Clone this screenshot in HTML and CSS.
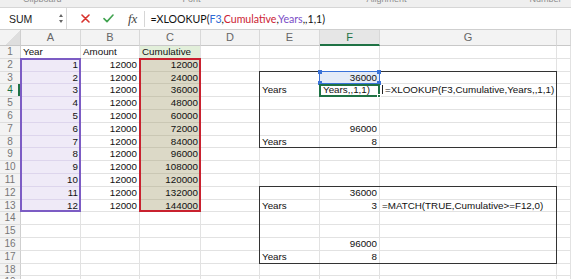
FILE: index.html
```html
<!DOCTYPE html>
<html lang="en">
<head>
  <meta charset="UTF-8" />
  <title>Cumulative lookup</title>
  <link rel="stylesheet" href="styles.css">
</head>
<body>
  <div class="ribbon">
    <span class="grp clip">Clipboard</span>
    <span class="grp font">Font</span>
    <span class="grp align">Alignment</span>
    <span class="grp num">Number</span>
  </div>

  <div class="fbar">
    <div class="namebox">
      SUM
      <span class="spin"><i class="up"></i><i class="down"></i></span>
    </div>
    <svg class="btn-x" width="9" height="9" viewBox="0 0 9 9"><path d="M1 1L8 8M8 1L1 8" stroke="#d8322e" stroke-width="1.6" stroke-linecap="round"/></svg>
    <svg class="btn-ok" width="11" height="9" viewBox="0 0 11 9"><path d="M1 4.6L4 7.6L10 1" fill="none" stroke="#41a350" stroke-width="1.6" stroke-linecap="round" stroke-linejoin="round"/></svg>
    <span class="fx">fx</span>
    <span class="fsep"></span>
    <div class="formula">=XLOOKUP(<span class="f-blue">F3</span>,<span class="f-red">Cumulative</span>,<span class="f-purple">Years</span>,,1,1)</div>
  </div>

  <div class="sheet">
    <div class="cells">
      <!-- header -->
      <div class="corner"></div>
      <div class="h">A</div><div class="h">B</div><div class="h">C</div><div class="h">D</div>
      <div class="h">E</div><div class="h h-on">F</div><div class="h">G</div><div class="h"></div>

      <div class="rh">1</div>
      <div class="c">Year</div><div class="c">Amount</div><div class="c gr">Cumulative</div>
      <div class="c"></div><div class="c"></div><div class="c"></div><div class="c"></div><div class="c"></div>

      <div class="rh">2</div>
      <div class="c n pu">1</div><div class="c n">12000</div><div class="c n tan">12000</div>
      <div class="c"></div><div class="c"></div><div class="c"></div><div class="c"></div><div class="c"></div>

      <div class="rh">3</div>
      <div class="c n pu">2</div><div class="c n">12000</div><div class="c n tan">24000</div>
      <div class="c"></div><div class="c"></div><div class="c n picked">36000</div><div class="c"></div><div class="c"></div>

      <div class="rh rh-on">4</div>
      <div class="c n pu">3</div><div class="c n">12000</div><div class="c n tan">36000</div>
      <div class="c"></div><div class="c">Years</div><div class="c edit">Years,,1,1)</div>
      <div class="c g"><span class="caret"></span>=XLOOKUP(F3,Cumulative,Years,,1,1)</div><div class="c"></div>

      <div class="rh">5</div>
      <div class="c n pu">4</div><div class="c n">12000</div><div class="c n tan">48000</div>
      <div class="c"></div><div class="c"></div><div class="c"></div><div class="c"></div><div class="c"></div>

      <div class="rh">6</div>
      <div class="c n pu">5</div><div class="c n">12000</div><div class="c n tan">60000</div>
      <div class="c"></div><div class="c"></div><div class="c"></div><div class="c"></div><div class="c"></div>

      <div class="rh">7</div>
      <div class="c n pu">6</div><div class="c n">12000</div><div class="c n tan">72000</div>
      <div class="c"></div><div class="c"></div><div class="c n">96000</div><div class="c"></div><div class="c"></div>

      <div class="rh">8</div>
      <div class="c n pu">7</div><div class="c n">12000</div><div class="c n tan">84000</div>
      <div class="c"></div><div class="c">Years</div><div class="c n">8</div><div class="c"></div><div class="c"></div>

      <div class="rh">9</div>
      <div class="c n pu">8</div><div class="c n">12000</div><div class="c n tan">96000</div>
      <div class="c"></div><div class="c"></div><div class="c"></div><div class="c"></div><div class="c"></div>

      <div class="rh">10</div>
      <div class="c n pu">9</div><div class="c n">12000</div><div class="c n tan">108000</div>
      <div class="c"></div><div class="c"></div><div class="c"></div><div class="c"></div><div class="c"></div>

      <div class="rh">11</div>
      <div class="c n pu">10</div><div class="c n">12000</div><div class="c n tan">120000</div>
      <div class="c"></div><div class="c"></div><div class="c"></div><div class="c"></div><div class="c"></div>

      <div class="rh">12</div>
      <div class="c n pu">11</div><div class="c n">12000</div><div class="c n tan">132000</div>
      <div class="c"></div><div class="c"></div><div class="c n">36000</div><div class="c"></div><div class="c"></div>

      <div class="rh">13</div>
      <div class="c n pu">12</div><div class="c n">12000</div><div class="c n tan">144000</div>
      <div class="c"></div><div class="c">Years</div><div class="c n">3</div>
      <div class="c g">=MATCH(TRUE,Cumulative&gt;=F12,0)</div><div class="c"></div>

      <div class="rh">14</div>
      <div class="c"></div><div class="c"></div><div class="c"></div>
      <div class="c"></div><div class="c"></div><div class="c"></div><div class="c"></div><div class="c"></div>

      <div class="rh">15</div>
      <div class="c"></div><div class="c"></div><div class="c"></div>
      <div class="c"></div><div class="c"></div><div class="c"></div><div class="c"></div><div class="c"></div>

      <div class="rh">16</div>
      <div class="c"></div><div class="c"></div><div class="c"></div>
      <div class="c"></div><div class="c"></div><div class="c n">96000</div><div class="c"></div><div class="c"></div>

      <div class="rh">17</div>
      <div class="c"></div><div class="c"></div><div class="c"></div>
      <div class="c"></div><div class="c">Years</div><div class="c n">8</div><div class="c"></div><div class="c"></div>

      <div class="rh">18</div>
      <div class="c"></div><div class="c"></div><div class="c"></div>
      <div class="c"></div><div class="c"></div><div class="c"></div><div class="c"></div><div class="c"></div>

      <div class="rh">19</div>
      <div class="c"></div><div class="c"></div><div class="c"></div>
      <div class="c"></div><div class="c"></div><div class="c"></div><div class="c"></div><div class="c"></div>
    </div>

    <!-- range outlines drawn over the cells -->
    <div class="marks">
      <div class="m-purple"></div>
      <div class="m-red"></div>
      <div class="m-box m-box1"></div>
      <div class="m-box m-box2"></div>
      <div class="m-sel"><i class="hd hd-tl"></i><i class="hd hd-tr"></i><i class="hd hd-bl"></i><i class="hd hd-br"></i></div>
      <div class="m-act"><i class="hd-g"></i></div>
    </div>
  </div>
</body>
</html>
```

FILE: styles.css
```css
* {
  box-sizing: border-box;
}

body {
  margin: 0;
  width: 571px;
  height: 279px;
  overflow: hidden;
  background: #fff;
  font-family: 'Liberation Sans', Arial, sans-serif;
  color: #111;
}

/* ribbon group labels, mostly scrolled off */
.ribbon {
  height: 8px;
  display: flex;
  overflow: hidden;
  background: #efefef;
  border-bottom: 1px solid #d6d6d6;
  font-size: 9px;
  color: #8e8e8e;
}

.grp {
  line-height: 9px;
  margin-top: -5px;
}

.clip { margin-left: 23px; }
.font { margin-left: 121px; }
.align { margin-left: 166px; }
.num { margin-left: 123px; }

/* formula bar */
.fbar {
  height: 22px;
  display: flex;
  align-items: center;
  border-bottom: 1px solid #cfcfcf;
}

.namebox {
  width: 67px;
  height: 100%;
  display: flex;
  align-items: center;
  padding-left: 9px;
  font-size: 10.5px;
  color: #222;
  border-right: 1px solid #d9d9d9;
}

.spin {
  margin-left: auto;
  margin-right: 3px;
  display: flex;
  flex-direction: column;
  gap: 3px;
}

.spin i {
  width: 0;
  height: 0;
  border-left: 2.5px solid transparent;
  border-right: 2.5px solid transparent;
}

.spin .up { border-bottom: 3px solid #666; }
.spin .down { border-top: 3px solid #666; }

.btn-x { margin-left: 14px; }
.btn-ok { margin-left: 13px; }

.fx {
  margin-left: 14px;
  font-family: 'Liberation Serif', serif;
  font-style: italic;
  font-size: 13px;
  color: #444;
}

.fsep {
  width: 1px;
  height: 16px;
  margin-left: 7px;
  background: #d6d6d6;
}

.formula {
  margin-left: 5px;
  font-family: Lato, 'Open Sans', sans-serif;
  font-size: 10.6px;
  color: #111;
}

.f-blue { color: #2f6bd3; }
.f-red { color: #cc2233; }
.f-purple { color: #7a4cc6; }

/* sheet: cells and outlines share one grid area */
.sheet {
  display: grid;
}

.cells,
.marks {
  grid-area: 1 / 1;
  display: grid;
  grid-template-columns: 21px 60px 59px 61px 59px 60px 60px 177px 1fr;
  grid-template-rows: 16px repeat(19, 12.8px);
}

.marks {
  pointer-events: none;
}

.corner {
  background: linear-gradient(135deg, #f3f3f3 58%, #dedede 58%);
  border-right: 1px solid #cfcfcf;
  border-bottom: 1px solid #c8c8c8;
}

.h {
  background: #f3f3f3;
  border-right: 1px solid #d8d8d8;
  border-bottom: 1px solid #c8c8c8;
  text-align: center;
  font-size: 11px;
  line-height: 15px;
  color: #666;
}

.h-on {
  background: #e6e6e6;
  color: #1f7244;
  border-bottom: 2px solid #1f7244;
}

.rh {
  background: #f3f3f3;
  border-right: 1px solid #cfcfcf;
  border-bottom: 1px solid #dedede;
  text-align: center;
  font-size: 10px;
  line-height: 12px;
  color: #777;
}

.rh-on {
  color: #1f7244;
  box-shadow: inset -2px 0 #1f7244;
}

.c {
  border-right: 1px solid #e2e2e2;
  border-bottom: 1px solid #e2e2e2;
  padding: 0 2px;
  font-size: 9.8px;
  line-height: 12px;
  white-space: nowrap;
}

.n { text-align: right; }
.g { padding-left: 2px; }
.edit { padding-left: 3px; }

.pu {
  background: #efeaf7;
  border-bottom-color: #ddd5ec;
}

.tan {
  background: #dcd9c7;
  border-bottom-color: #cac7b4;
}

.gr { background: #e2efda; }
.picked { background: #e4ebf8; }

.caret {
  display: inline-block;
  width: 1px;
  height: 9px;
  margin-right: 2px;
  vertical-align: -1px;
  background: #222;
}

/* outlines */
.m-purple,
.m-red {
  grid-column: 2;
  grid-row: 3 / 15;
  margin: -1px 0 0 -1px;
  border: 2px solid #7c5cc4;
}

.m-red {
  grid-column: 4;
  border-color: #c9212f;
}

.m-box {
  grid-column: 6 / 9;
  margin: -1px 0 0 -1px;
  border: 1px solid #333;
}

.m-box1 { grid-row: 4 / 10; }
.m-box2 { grid-row: 13 / 19; }

.m-sel {
  grid-column: 7;
  grid-row: 4;
  margin: -1px 0 0 -1px;
  border: 1px solid #3a72d8;
  position: relative;
}

.hd {
  position: absolute;
  width: 4px;
  height: 4px;
  background: #3a72d8;
}

.hd-tl { left: -2px; top: -2px; }
.hd-tr { right: -2px; top: -2px; }
.hd-bl { left: -2px; bottom: -2px; }
.hd-br { right: -2px; bottom: -2px; }

.m-act {
  grid-column: 7;
  grid-row: 5;
  margin: 0 0 0 -1px;
  border: 2px solid #1f7244;
  position: relative;
}

.hd-g {
  position: absolute;
  right: -3px;
  bottom: -3px;
  width: 4px;
  height: 4px;
  background: #1f7244;
  border: 1px solid #fff;
}
```
